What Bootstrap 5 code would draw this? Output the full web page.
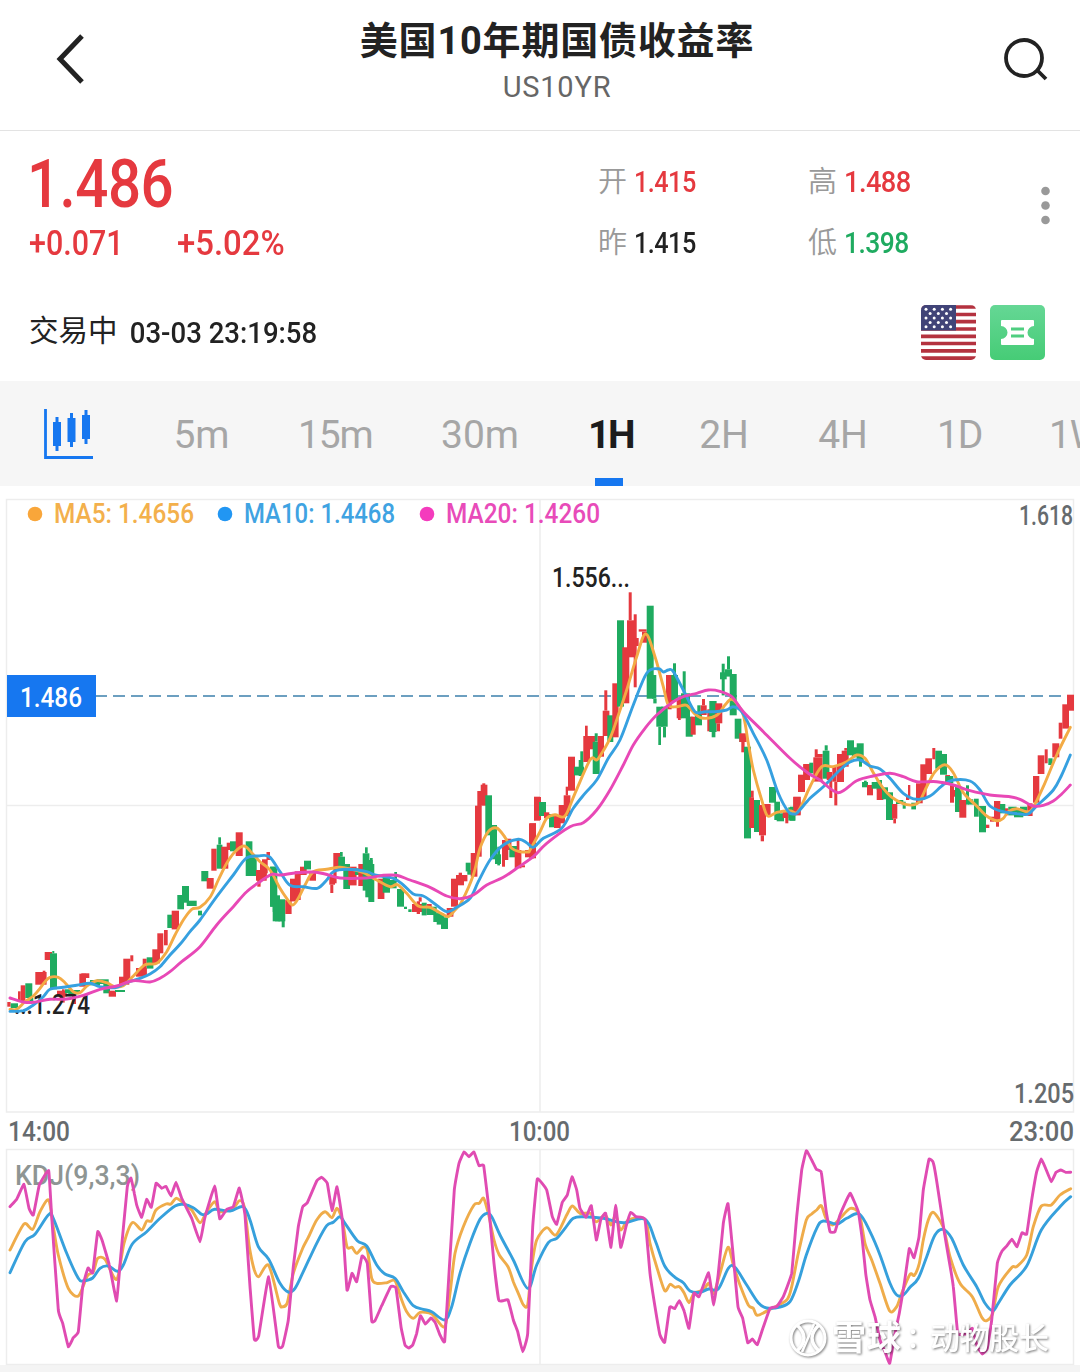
<!DOCTYPE html>
<html lang="zh-CN">
<head>
<meta charset="utf-8">
<meta name="viewport" content="width=device-width, initial-scale=1">
<title>美国10年期国债收益率 US10YR</title>
<link rel="stylesheet" href="https://cdn.jsdelivr.net/npm/bootstrap@5.3.0/dist/css/bootstrap.min.css">
<style>
:root{--up:#e5393f;--down:#1fab60;--ink:#222;--accent:#1677f0}
body{font-family:Roboto,"Noto Sans CJK SC",sans-serif;color:var(--ink);background:#fff;width:1080px;height:1372px;overflow:hidden;line-height:1}
.topbar{height:131px;border-bottom:1px solid #e3e3e3;padding:0 32px 0 55px}
.topbar .inst{padding-top:21px;margin-left:25px}
.inst-name{font-size:38px;font-weight:700;letter-spacing:.8px;line-height:40px;white-space:nowrap}
.inst-code{font-size:29px;color:#666;line-height:34px;margin-top:9px;letter-spacing:.8px}
.quote{height:250px;padding:0 30px 0 29px}
.quote-top{height:150px}
.din{display:inline-block;transform-origin:0 50%;transform:scaleX(.87)}
.din-90{transform:scaleX(.91)}
.din-94{transform:scaleX(.94)}
.last{font-size:67px;font-weight:500;color:var(--up);line-height:60px;padding-top:23px;letter-spacing:-.6px;margin-left:-2px}
.chg{font-size:35px;font-weight:500;color:var(--up);line-height:40px;margin-top:10px;gap:39px}
.ohlc{width:420px;padding-top:32px;row-gap:23px;flex:none}
.ohlc>div{width:210px;height:38px;font-size:29px;line-height:38px;font-weight:500;letter-spacing:-.6px;white-space:nowrap}
.ohlc em{font-style:normal;font-weight:350;color:#999;margin-right:7px;letter-spacing:0}
.up{color:var(--up)}.down{color:var(--down)}
.status{font-size:29.5px;height:58px;margin-top:22px}
.status time{font-weight:500;font-size:29px;position:relative;top:1px;transform:scaleX(.95)}
.tabs{height:105px;background:#f6f6f6;overflow:hidden;gap:68px;padding-left:43px}
.tabs a{font-size:39px;line-height:108px;color:#a6a6a6;text-decoration:none;text-align:center;white-space:nowrap;flex:none;height:105px}
.tabs .tight{letter-spacing:-1.2px}
.tabs a.active{color:#1c1c1c;font-weight:700;font-size:39px;letter-spacing:-2.5px;background:linear-gradient(var(--accent),var(--accent)) 7px 97px/28px 8px no-repeat}
.chart{display:block}
.chart text{font-weight:500;font-family:Roboto,"Noto Sans CJK SC",sans-serif}
</style>
</head>
<body>
<header class="topbar d-flex justify-content-between">
  <svg width="32" height="52" viewBox="0 0 32 52" style="margin-top:33px" fill="none" stroke="#222" stroke-width="5"><path d="M27 3 5 26 27 49"/></svg>
  <div class="inst text-center">
    <div class="inst-name">美国10年期国债收益率</div>
    <div class="inst-code">US10YR</div>
  </div>
  <svg width="46" height="46" viewBox="0 0 46 46" style="margin-top:36px" fill="none" stroke="#222" stroke-width="3.8"><circle cx="22" cy="22" r="18"/><path d="m35 34 9 9"/></svg>
</header>

<section class="quote">
  <div class="quote-top d-flex">
    <div class="flex-grow-1">
      <div class="last"><span class="din">1.486</span></div>
      <div class="chg d-flex"><span class="din">+0.071</span><span class="din din-94">+5.02%</span></div>
    </div>
    <div class="ohlc d-flex flex-wrap align-content-start">
      <div><em>开</em><span class="up din">1.415</span></div>
      <div><em>高</em><span class="up din din-94">1.488</span></div>
      <div><em>昨</em><span class="din">1.415</span></div>
      <div><em>低</em><span class="down din din-90">1.398</span></div>
    </div>
    <svg class="flex-shrink-0" width="32" height="40" viewBox="0 0 32 40" style="margin-top:54px" fill="#999"><circle cx="27.500" cy="6" r="4.300"/><circle cx="27.500" cy="20.500" r="4.300"/><circle cx="27.500" cy="35" r="4.300"/></svg>
  </div>
  <div class="status d-flex align-items-center">
    <span>交易中</span><time class="din ms-2 ps-1">03-03 23:19:58</time>
    <svg class="ms-auto" width="55" height="55" viewBox="0 0 55 55">
      <clipPath id="flagclip"><rect width="55" height="55" rx="5"/></clipPath>
      <g clip-path="url(#flagclip)"><rect width="55" height="55" fill="#fff"/>
      <path d="M0 2H55M0 9.500H55M0 16.700H55M0 24H55M0 31.300H55M0 38.500H55M0 45.800H55M0 53.200H55" stroke="#b4323f" stroke-width="3.700"/>
      <rect width="35" height="25.500" fill="#414478"/>
      <g fill="#fff" id="stars"></g></g>
    </svg>
    <svg style="margin:0 5px 0 14px" width="55" height="55" viewBox="0 0 55 55">
      <defs><linearGradient id="tk" x2="0" y2="1"><stop stop-color="#65d795"/><stop offset="1" stop-color="#46cc76"/></linearGradient></defs>
      <rect width="55" height="55" rx="5" fill="url(#tk)"/>
      <path d="M12 15H43Q44 15 44 16V21A6.500 6.500 0 0 0 44 34V39Q44 40 43 40H12Q11 40 11 39V34A6.500 6.500 0 0 0 11 21V16Q11 15 12 15Z" fill="#fff"/>
      <path d="M21 24H34M21 31H34" stroke="#4fce80" stroke-width="3"/>
    </svg>
  </div>
</section>

<nav class="tabs d-flex">
  <svg class="flex-shrink-0" width="62" height="52" viewBox="0 0 62 52" style="margin-top:27px" stroke="#1677f0" fill="none"><path d="M2.500 1V49.500H50" stroke-width="2.800"/><path d="M14 9V43M28.500 5V39M43 2V36" stroke-width="3"/><path d="M14 14V38M28.500 10V34M43 7V31" stroke-width="8" stroke-linecap="butt"/></svg>
  <a href="#" style="width:57px">5m</a>
  <a href="#" class="tight" style="width:74px">15m</a>
  <a href="#" style="width:80px">30m</a>
  <a href="#" class="active" style="width:43px">1H</a>
  <a href="#" style="width:50px">2H</a>
  <a href="#" style="width:52px">4H</a>
  <a href="#" class="tight" style="width:44px">1D</a>
  <a href="#" class="tight">1W</a>
</nav>

<svg class="chart" width="1080" height="886" viewBox="0 486 1080 886">
  <rect x="0" y="1365" width="1080" height="7" fill="#f4f4f4"/>
  <g fill="none" stroke="#ededed" stroke-width="1.500">
    <rect x="6.500" y="499.500" width="1067" height="612.500"/>
    <path d="M540 500V1112M7 805.500H1073M540 1150V1364"/>
    <rect x="6.500" y="1149.500" width="1067" height="215"/>
  </g>
  <path d="M95 696H1066" stroke="#6c9fc0" stroke-width="2" stroke-dasharray="12 6"/>
  <g id="candles"></g>
  <text x="14" y="1014" font-size="27" fill="#222" textLength="76" lengthAdjust="spacingAndGlyphs">...1.274</text>
  <text x="15" y="1185" font-size="28" fill="#8e9593" textLength="125" lengthAdjust="spacingAndGlyphs">KDJ(9,3,3)</text>
  <g id="lines" fill="none" stroke-width="2.900" stroke-linejoin="round" stroke-linecap="round"></g>
  <g font-size="27">
    <circle cx="35" cy="514" r="7.300" fill="#f9a63a"/>
    <text x="54" y="523" fill="#f3b04c" textLength="140" lengthAdjust="spacingAndGlyphs">MA5: 1.4656</text>
    <circle cx="225" cy="514" r="7.300" fill="#2196f3"/>
    <text x="244" y="523" fill="#3fa3e2" textLength="151" lengthAdjust="spacingAndGlyphs">MA10: 1.4468</text>
    <circle cx="427" cy="514" r="7.300" fill="#f43bbd"/>
    <text x="446" y="523" fill="#e84bb9" textLength="154" lengthAdjust="spacingAndGlyphs">MA20: 1.4260</text>
    <text x="552" y="587" fill="#222" textLength="78" lengthAdjust="spacingAndGlyphs">1.556...</text>
    <g fill="#666b6e">
      <text x="1019" y="525" textLength="54" lengthAdjust="spacingAndGlyphs">1.618</text>
      <text x="1014" y="1103" textLength="60" lengthAdjust="spacingAndGlyphs">1.205</text>
      <text x="8" y="1141" textLength="62" lengthAdjust="spacingAndGlyphs">14:00</text>
      <text x="509" y="1141" textLength="61" lengthAdjust="spacingAndGlyphs">10:00</text>
      <text x="1009" y="1141" textLength="65" lengthAdjust="spacingAndGlyphs">23:00</text>
    </g>
  </g>
  <rect x="7" y="675" width="89" height="42" fill="#1677f0"/>
  <text x="20" y="707" font-size="27" fill="#fff" textLength="62" lengthAdjust="spacingAndGlyphs">1.486</text>
  <g style="filter:drop-shadow(1.500px 1.500px 1px rgba(0,0,0,.5))" fill="#fff">
    <g fill="none" stroke="#fff" stroke-width="3">
      <circle cx="808" cy="1338" r="17"/>
      <path d="M797 1325Q811 1338 797 1351M819 1325Q805 1338 819 1351" stroke-width="3.500"/>
      <path d="M814 1324 802 1352" stroke-width="2.500"/>
    </g>
    <text x="832" y="1350" font-size="34" style="font-weight:700" textLength="69">雪球</text>
    <text x="906" y="1348" font-size="28">：</text>
    <text x="930" y="1349" font-size="30" textLength="119">动物股长</text>
  </g>
</svg>

<script>
const NS='http://www.w3.org/2000/svg';
function el(parent,tag,attrs){const e=document.createElementNS(NS,tag);for(const k in attrs)e.setAttribute(k,attrs[k]);parent.appendChild(e);return e}

const stars=document.getElementById('stars');
for(let r=0;r<5;r++)for(let c=0;c<(r%2?3:4);c++)el(stars,'circle',{cx:5+c*8.2+(r%2?4.1:0),cy:4.2+r*4.4,r:1.5});

// Panels of the series: origin of each panel, stored at 3 units per pixel
const P={A:[0,820],B:[260,760],C:[530,560],D:[790,670],E:[0,1140],F:[270,1140],G:[540,1140],H:[780,1140]};

// Candle pieces: direction, left, top, right, bottom
const candles={
A:`r 22 546 32 560;g 32 550 54 564;r 54 514 62 546;r 62 496 76 546;g 76 490 97 534;g 88 534 100 546;r 106 456 140 494;r 128 452 136 456;r 134 396 156 420;g 150 400 171 508;g 157 393 163 400;r 171 512 200 530;r 186 508 194 548;g 195 508 210 520;g 205 510 240 522;r 216 522 228 552;r 238 461 258 500;r 244 460 268 474;g 270 480 300 496;g 290 478 326 492;g 310 490 330 520;r 326 512 348 530;g 345 510 375 516;r 357 470 388 494;r 370 416 391 474;r 391 406 400 424;r 408 444 440 470;r 428 416 440 470;g 440 412 460 446;r 457 388 480 430;r 472 340 490 400;r 492 330 503 376;g 502 284 520 324;r 515 272 537 328;g 532 225 552 268;g 546 198 567 248;g 560 242 590 258;g 594 272 606 286;g 604 153 625 184;r 620 174 641 206;r 634 86 650 152;g 650 74 667 146;g 655 52 663 74;r 664 80 685 146;r 680 68 706 90;g 690 64 712 94;r 707 37 728 108;g 737 64 757 112;g 737 112 770 168;r 768 150 800 182;r 772 180 782 200;r 786 118 803 160;r 800 96 810 120;g 811 140 832 260;g 818 260 832 276;g 825 226 840 304`,
B:`g 30 320 50 440;g 38 430 70 484;g 55 418 76 484;g 65 480 74 502;r 0 310 20 350;r 20 276 30 300;r 76 420 95 462;r 90 356 108 424;r 104 334 122 420;r 120 320 140 345;g 132 302 153 328;r 148 335 168 362;r 208 345 225 374;r 211 374 220 399;r 220 279 241 330;r 220 330 230 370;g 235 290 255 325;g 240 276 248 290;g 250 312 270 387;r 265 320 290 376;g 285 325 300 345;r 295 312 315 378;g 308 280 328 392;g 315 262 323 280;g 316 300 338 412;g 325 312 343 426;g 330 294 338 312;r 353 356 373 417;g 368 350 390 398;g 370 360 410 385;g 403 336 411 366;g 411 387 432 440;g 432 440 441 447;g 445 448 455 456;r 456 432 490 456;r 470 424 480 462;r 476 412 485 425;g 485 428 500 466;r 500 432 515 460;g 500 440 530 465;g 520 460 540 486;g 530 460 552 494;g 543 472 564 507;r 560 444 580 470;r 573 356 594 440;r 588 345 612 376;r 596 338 606 345;r 608 345 622 364;g 617 308 632 334;g 622 330 640 344;r 632 279 652 350;r 645 137 665 290;r 652 93 664 140;r 662 74 682 137;r 667 70 676 76;g 676 106 696 226;g 690 195 711 298;g 705 283 723 312;g 712 260 720 316;r 726 240 745 300;r 726 300 735 320;r 740 236 754 270;g 748 258 775 292;r 764 270 784 325;r 770 240 778 270;r 780 316 795 322;r 795 270 810 292;r 808 270 822 295;r 807 190 828 270;r 822 110 840 182`,
C:`r 0 790 18 895;r 12 711 33 780;g 27 726 48 768;r 42 757 58 775;g 57 762 72 802;r 72 765 92 804;r 86 735 105 790;r 101 706 121 768;r 107 680 114 706;r 114 590 135 692;g 132 620 162 646;g 146 600 160 648;g 151 574 160 600;r 160 528 180 606;r 165 497 173 528;r 174 528 195 568;g 188 545 209 642;g 194 520 203 545;r 203 528 222 590;r 218 452 238 528;r 223 391 232 452;g 232 466 250 546;r 247 370 266 532;g 261 181 282 440;r 277 262 298 430;r 291 181 313 292;r 296 97 305 181;r 311 163 320 382;r 318 234 326 258;r 326 208 350 215;r 336 215 352 248;g 350 137 371 416;g 366 345 379 416;g 370 416 380 430;g 379 440 400 500;g 385 500 393 555;g 393 440 413 500;g 399 500 408 532;r 408 345 430 430;r 413 430 425 448;g 424 345 444 420;g 429 310 438 345;r 440 415 455 475;r 444 470 452 480;g 453 400 480 475;g 458 334 467 400;g 467 470 488 530;r 482 470 497 524;g 495 462 516 496;g 502 436 512 462;r 512 436 530 465;r 516 417 525 436;r 532 448 548 514;g 538 423 560 516;g 545 516 556 532;r 556 430 577 490;r 560 490 570 514;g 570 337 590 358;g 575 311 584 406;g 585 328 606 350;g 591 289 600 328;g 599 342 620 466;g 614 476 634 536;g 628 530 636 546;r 628 520 650 546;r 634 546 644 577;g 642 560 663 835;r 658 712 672 804;r 663 692 671 712;g 672 720 690 816;r 687 735 708 826;r 692 826 702 844;r 700 732 722 768;g 717 681 738 728;g 733 725 750 780;g 740 760 762 784;r 758 752 776 774;r 766 774 775 790;g 775 742 796 782;r 790 711 812 764;r 804 645 825 696;r 820 612 840 660`,
D:`g 0 410 16 452;r 10 380 32 436;r 24 314 45 366;r 40 283 58 325;g 58 278 70 310;r 70 262 98 335;r 74 238 83 252;r 74 252 98 262;g 98 242 118 326;g 104 226 113 242;r 110 306 126 330;r 118 330 127 384;r 127 290 140 335;r 133 335 142 406;r 141 252 162 336;r 155 242 176 290;r 163 234 171 242;g 171 211 192 256;g 186 232 206 262;g 200 220 221 270;g 207 270 216 290;g 216 336 234 352;g 222 332 230 336;r 231 345 249 376;g 245 336 262 356;g 260 330 276 360;r 260 356 280 390;g 276 352 294 388;g 288 367 309 450;r 306 402 322 446;r 310 446 318 460;g 318 390 340 402;g 338 395 347 416;r 348 378 358 390;r 354 345 361 380;g 364 398 378 418;r 378 340 398 400;r 391 283 410 385;r 406 265 426 312;r 427 234 436 268;g 436 242 456 296;g 450 252 471 314;r 466 315 480 345;g 466 318 490 340;r 480 345 492 398;r 490 360 500 380;g 495 350 515 426;r 508 390 529 443;g 528 346 537 404;g 535 388 550 404;g 552 386 566 440;g 567 408 588 487;r 588 464 598 474;r 600 440 612 455;r 612 393 631 450;r 618 450 627 470;g 630 402 646 430;r 645 415 655 436;g 655 410 680 436;g 672 418 700 442;g 690 410 712 436;r 712 400 728 438;r 729 318 748 398;r 743 256 763 312;r 764 238 773 280;g 775 265 788 285;r 787 220 808 262;r 806 158 817 206;r 817 103 837 176;r 831 74 852 122`};
const cg=document.getElementById('candles');
for(const k in candles)for(const s of candles[k].split(';')){
  const [c,a,b,d,e]=s.split(' ');
  el(cg,'rect',{x:(P[k][0]+a/3).toFixed(1),y:(P[k][1]+b/3).toFixed(1),width:((d-a)/3).toFixed(1),height:((e-b)/3).toFixed(1),fill:c=='r'?'#e5393f':'#1fab60'});
}

const series=[
['#f3ab45',.5,{A:'30,568 50,568 75,545 100,528 120,505 135,485 150,472 175,472 195,488 220,515 240,518 262,497 290,482 320,488 345,500 370,497 400,468 435,434 470,430 500,395 525,345 550,300 575,268 600,262 630,232 655,180 680,130 705,95 732,78 755,98 780,125 810,150',
B:'60,385 80,415 98,435 115,415 135,375 160,335 200,328 240,322 275,328 310,338 350,360 390,380 412,374 440,400 475,438 510,442 540,458 565,470 585,450 605,425 640,345 660,265 685,215 710,204 735,232 755,265 780,275 805,275',
C:'0,870 30,815 50,775 75,764 105,768 135,700 180,600 200,600 215,580 240,535 260,480 290,390 320,290 347,222 375,290 400,380 415,435 440,440 470,436 495,462 520,475 560,466 585,435 603,418 620,430 640,465 655,550 670,630 695,720 713,768 740,757 780,752',
D:'20,428 40,395 60,350 95,290 130,290 170,275 200,255 225,265 250,308 280,355 310,385 350,404 385,398 410,350 435,305 465,284 490,308 520,368 560,408 590,438 620,452 640,445 655,425 680,416 710,425 728,415 760,350 800,255 841,172'}],
['#36a0e0',.5,{A:'30,574 70,572 100,555 130,530 150,508 190,502 230,496 270,490 300,500 345,503 380,488 420,475 450,462 480,440 510,405 540,373 570,335 600,300 650,230 700,165 738,115 775,108 808,110',
B:'60,335 90,376 130,380 172,385 200,360 220,335 260,328 320,335 345,345 400,355 430,375 460,402 490,408 520,428 560,455 590,442 630,415 655,365 690,300 730,255 775,238 800,248 820,262',
C:'40,835 95,805 130,745 165,700 200,660 235,595 270,540 310,435 350,340 385,326 400,336 415,330 430,335 465,400 495,455 525,455 555,455 590,450 610,440 635,455 670,520 710,600 745,700 775,755 792,762',
D:'22,428 60,385 100,350 150,300 180,276 210,270 240,288 270,297 300,325 340,370 380,388 420,378 460,344 490,330 540,333 570,360 600,408 640,425 690,432 715,432 740,408 790,360 815,315 841,255'}],
['#e848b6',.5,{A:'30,534 70,546 100,547 150,538 200,537 250,526 300,508 350,498 400,482 450,486 480,475 510,455 545,425 600,380 650,315 700,260 740,215 780,185 815,163',
B:'60,345 110,338 160,336 195,342 240,354 320,354 370,346 410,346 450,360 510,382 560,408 600,416 640,405 680,375 730,352 770,325',
C:'10,890 50,850 120,800 160,788 200,750 240,690 280,615 310,555 345,505 380,465 430,425 460,410 500,400 535,390 570,394 605,410 640,455 700,515 780,595',
D:'55,310 90,330 145,368 200,332 250,318 300,310 340,320 380,335 440,335 490,345 540,362 600,375 660,380 690,388 730,408 760,406 790,393 815,372 841,345'}],
['#efac4a',.4,{E:'30,330 72,252 98,268 120,215 146,180 160,260 175,345 205,445 235,468 262,408 280,395 293,355 315,358 350,418 372,310 397,248 425,270 440,243 454,243 468,210 498,192 513,192 528,175 545,185 575,210 600,248 620,215 644,185 660,215 700,205 718,182 733,200 748,320 763,390 776,410 806,376',
F:'28,490 38,500 52,488 70,400 98,325 115,292 140,240 165,215 186,233 201,205 217,240 231,320 246,322 260,340 278,322 292,330 305,415 320,430 350,428 375,422 395,480 410,515 430,535 450,517 485,522 524,560 540,460 555,340 580,260 612,195 628,190 641,175 656,225 672,300 688,345 714,380 730,425 745,460 760,494 773,494 785,380 800,300',
G:'20,263 48,285 80,225 97,198 120,220 150,220 169,245 195,225 213,255 227,225 242,270 265,240 315,238 330,310 350,380 374,452 390,433 405,442 418,440 432,458 447,488 462,460 490,450 506,430 521,460 540,400 564,322 580,375 600,435 625,495 640,505 652,526 690,508 740,480 755,440 775,340',
H:'79,240 95,222 110,210 124,197 138,235 158,255 180,235 211,205 238,222 255,310 275,360 300,430 329,513 350,500 365,460 390,403 403,406 418,370 430,300 445,240 460,217 490,262 510,350 540,430 577,470 605,532 620,542 638,520 655,440 696,382 710,380 740,345 760,260 784,198 814,195 840,165 872,146'}],
['#36a0dc',.5,{E:'30,398 75,305 105,283 146,224 160,235 200,340 235,415 250,422 278,414 300,385 325,378 352,394 370,375 397,312 440,275 480,235 525,198 550,193 580,203 605,223 620,222 644,208 690,213 730,200 750,240 775,320 806,358',
F:'30,430 55,456 75,445 100,395 140,310 170,257 190,247 210,230 225,250 262,302 290,318 320,375 345,402 375,415 400,455 430,497 460,508 485,515 524,540 545,500 570,400 600,310 630,238 650,220 665,230 690,285 730,360 773,445 800,375',
G:'25,308 50,295 75,265 100,235 130,230 190,235 250,248 315,238 345,300 374,378 405,412 430,428 450,453 480,457 506,447 535,447 565,385 585,382 620,435 655,488 680,504 720,501 750,485 775,425',
H:'79,345 110,265 130,243 170,252 200,235 238,222 270,275 300,345 330,430 350,465 370,465 390,442 415,415 440,350 465,285 490,268 515,295 550,375 590,440 615,490 638,512 655,490 690,435 740,378 784,270 840,200 872,170'}],
['#e04bb2',.15,{E:'30,200 50,178 72,133 87,205 100,225 118,135 146,92 155,230 175,510 188,550 205,620 220,593 235,575 248,440 264,384 278,398 293,275 306,300 328,375 350,483 362,350 382,140 393,114 403,160 410,195 425,232 440,178 454,202 468,130 485,145 498,139 513,168 528,127 545,175 575,235 600,305 614,235 644,138 659,236 680,208 700,200 718,144 735,225 750,440 763,598 776,588 806,410',
F:'25,618 38,618 55,540 70,380 85,260 98,200 112,188 140,123 155,112 172,130 186,212 201,140 217,240 231,450 246,400 260,425 276,348 292,370 305,542 315,542 335,497 362,440 378,445 393,560 405,615 416,624 428,615 440,580 451,527 466,552 483,534 496,548 510,585 524,604 537,400 553,150 567,70 582,36 597,50 612,36 627,77 641,77 656,200 672,370 686,480 700,482 714,480 730,540 743,575 758,635 773,580 788,260 802,117',
G:'20,150 37,230 50,253 67,187 82,165 96,110 110,150 120,205 138,232 154,197 169,300 182,240 197,220 213,322 227,196 242,322 258,260 272,217 288,230 315,238 330,400 345,500 360,585 374,607 389,502 404,506 418,482 433,515 447,565 462,460 477,470 506,398 521,495 535,400 550,250 564,191 580,350 594,500 608,535 623,608 637,597 652,614 667,570 690,505 710,500 730,470 755,400 770,230 785,90',
H:'79,32 95,60 109,88 124,97 138,210 150,275 165,275 180,225 195,190 211,160 235,215 247,300 257,400 270,480 285,530 300,600 315,635 329,670 343,590 358,520 373,430 388,326 402,353 417,290 430,150 447,58 460,68 475,155 492,270 507,360 520,440 533,580 550,582 562,582 577,565 592,620 607,642 622,625 635,540 652,370 665,335 680,318 696,298 711,320 726,278 740,282 755,180 770,95 784,57 798,88 814,125 828,97 842,90 857,97 872,97'}]];
const lg=document.getElementById('lines');
for(const [color,t,parts] of series){
  const p=[];
  for(const k in parts)for(const s of parts[k].split(' ')){const [x,y]=s.split(',').map(Number);p.push([P[k][0]+x/3,P[k][1]+y/3])}
  let d='M'+p[0];
  for(let i=0;i<p.length-1;i++){
    const a=p[Math.max(i-1,0)],b=p[i],c=p[i+1],e=p[Math.min(i+2,p.length-1)],f=t/3;
    d+=`C${[b[0]+(c[0]-a[0])*f,b[1]+(c[1]-a[1])*f,c[0]-(e[0]-b[0])*f,c[1]-(e[1]-b[1])*f,c[0],c[1]].map(v=>v.toFixed(1))}`;
  }
  el(lg,'path',{d,stroke:color});
}
</script>
<script src="https://cdn.jsdelivr.net/npm/bootstrap@5.3.0/dist/js/bootstrap.bundle.min.js"></script>
</body>
</html>
